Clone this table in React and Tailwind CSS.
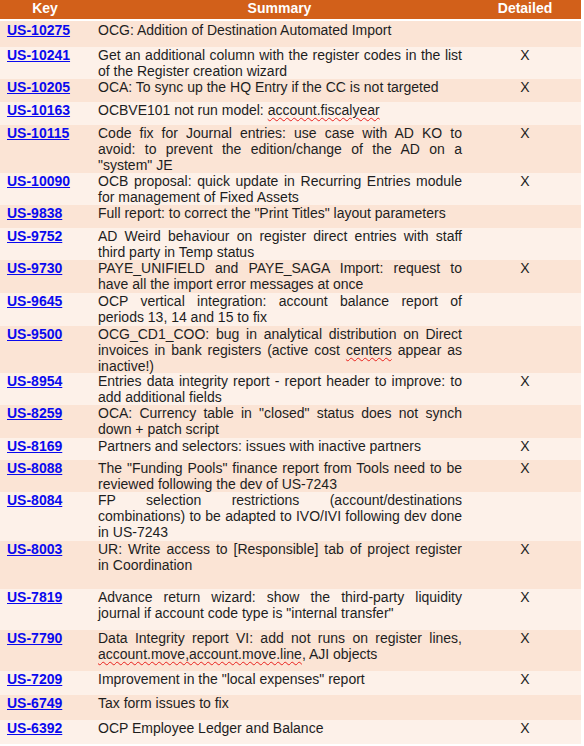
import React from "react";

const Sq = ({ children }) => (
  <span className="underline decoration-wavy decoration-[#e8201c] decoration-1 underline-offset-[2px]">
    {children}
  </span>
);

const rows = [
  { key: "US-10275", h: 26, x: false, lines: ["OCG: Addition of Destination Automated Import"] },
  { key: "US-10241", h: 32, x: true, lines: ["Get an additional column with the register codes in the list", "of the Register creation wizard"] },
  { key: "US-10205", h: 23, x: true, lines: ["OCA: To sync up the HQ Entry if the CC is not targeted"] },
  { key: "US-10163", h: 23, x: false, lines: [<>OCBVE101 not run model: <Sq>account.fiscalyear</Sq></>] },
  {
    key: "US-10115", h: 48, x: true,
    lines: ["Code fix for Journal entries: use case with AD KO to", "avoid: to prevent the edition/change of the AD on a", '"system" JE'],
  },
  { key: "US-10090", h: 32, x: true, lines: ["OCB proposal: quick update in Recurring Entries module", "for management of Fixed Assets"] },
  { key: "US-9838", h: 23, x: false, lines: ['Full report: to correct the "Print Titles" layout parameters'] },
  { key: "US-9752", h: 32, x: false, lines: ["AD Weird behaviour on register direct entries with staff", "third party in Temp status"] },
  { key: "US-9730", h: 33, x: true, lines: ["PAYE_UNIFIELD and PAYE_SAGA Import: request to", "have all the import error messages at once"] },
  { key: "US-9645", h: 33, x: false, lines: ["OCP vertical integration: account balance report of", "periods 13, 14 and 15 to fix"] },
  {
    key: "US-9500", h: 47, x: false,
    lines: [
      "OCG_CD1_COO: bug in analytical distribution on Direct",
      <>invoices in bank registers (active cost <Sq>centers</Sq> appear as</>,
      "inactive!)",
    ],
  },
  { key: "US-8954", h: 32, x: true, lines: ["Entries data integrity report - report header to improve: to", "add additional fields"] },
  { key: "US-8259", h: 33, x: false, lines: ['OCA: Currency table in "closed" status does not synch', "down + patch script"] },
  { key: "US-8169", h: 22, x: true, lines: ["Partners and selectors: issues with inactive partners"] },
  { key: "US-8088", h: 32, x: true, lines: ['The "Funding Pools" finance report from Tools need to be', "reviewed following the dev of US-7243"] },
  {
    key: "US-8084", h: 49, x: false,
    lines: ["FP selection restrictions (account/destinations", "combinations) to be adapted to IVO/IVI following dev done", "in US-7243"],
  },
  { key: "US-8003", h: 48, x: true, lines: ["UR: Write access to [Responsible] tab of project register", "in Coordination"] },
  { key: "US-7819", h: 41, x: true, lines: ["Advance return wizard: show the third-party liquidity", 'journal if account code type is "internal transfer"'] },
  {
    key: "US-7790", h: 41, x: true,
    lines: ["Data Integrity report VI: add not runs on register lines,", <><Sq>account.move,account.move.line</Sq>, AJI objects</>],
  },
  { key: "US-7209", h: 24, x: true, lines: ['Improvement in the "local expenses" report'] },
  { key: "US-6749", h: 25, x: false, lines: ["Tax form issues to fix"] },
  { key: "US-6392", h: 24, x: true, lines: ["OCP Employee Ledger and Balance"] },
];

export default function App() {
  return (
    <div className="min-h-screen bg-white font-['Liberation_Sans',Arial,sans-serif] text-[14px] leading-[16px]">
      <div className="w-[581px]">
        {/* header */}
        <div className="flex h-[21px] bg-[#d2601a] border-b-2 border-white font-bold text-white">
          <div className="w-[90px] text-center">Key</div>
          <div className="w-[379px] text-center">Summary</div>
          <div className="w-[112px] text-center">Detailed</div>
        </div>

        {rows.map((r, i) => (
          <div
            key={r.key}
            className={`flex ${i % 2 === 0 ? "bg-[#fbe4d5]" : "bg-[#fdf1e9]"} ${i === 0 ? "pt-px" : ""}`}
            style={{ height: r.h }}
          >
            <div className="w-[90px] pl-[7px]">
              <a href="#" className="font-bold text-[#0a0aee] underline underline-offset-1">
                {r.key}
              </a>
            </div>
            <div className="w-[379px] pl-[8px] pr-[7px] text-[#1e1e1e]">
              {r.lines.map((l, j) => (
                <div
                  key={j}
                  className={`whitespace-nowrap ${j < r.lines.length - 1 ? "text-justify [text-align-last:justify]" : ""}`}
                >
                  {l}
                </div>
              ))}
            </div>
            <div className="w-[112px] text-center text-[#1e1e1e]">{r.x ? "X" : ""}</div>
          </div>
        ))}
      </div>
    </div>
  );
}
